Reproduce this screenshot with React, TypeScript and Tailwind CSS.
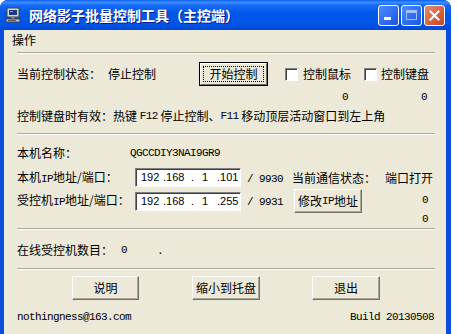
import React from "react";

const CN = { fontFamily: '"Noto Sans CJK SC", "Noto Sans", sans-serif' };
const MONO = { fontFamily: '"Liberation Mono", "DejaVu Sans Mono", monospace' };

function M({ children }: { children: React.ReactNode }) {
  return (
    <span style={MONO} className="text-[11px] tracking-[-0.6px]">
      {children}
    </span>
  );
}

function Sep() {
  return (
    <div className="ml-[13px] mr-[11px] h-[2px] border-t border-t-[#ACA899] border-b border-b-white" />
  );
}

function Btn({
  w,
  children,
  focus,
}: {
  w: string;
  children: React.ReactNode;
  focus?: boolean;
}) {
  if (focus) {
    return (
      <div className={`${w} h-[24px] border border-black bg-[#ECE9D8]`}>
        <div className="h-full border-t border-l border-t-white border-l-white border-r border-b border-r-[#716F64] border-b-[#716F64] p-[2px]">
          <div className="h-full border border-dotted border-black flex items-center justify-center text-[12px] leading-none">
            {children}
          </div>
        </div>
      </div>
    );
  }
  return (
    <div
      className={`${w} h-[24px] bg-[#ECE9D8] border-t border-l border-t-white border-l-white border-r border-b border-r-[#716F64] border-b-[#716F64] flex items-center justify-center text-[12px] leading-none shadow-[inset_-1px_-1px_0_#ACA899]`}
    >
      {children}
    </div>
  );
}

function Check() {
  return (
    <div className="w-[13px] h-[13px] bg-white border border-t-[#808080] border-l-[#808080] border-r-white border-b-white shadow-[inset_1px_1px_0_#404040]" />
  );
}

function IPBox({ last }: { last: string }) {
  return (
    <div
      className="w-[106px] h-[19px] bg-white border border-t-[#808080] border-l-[#808080] border-r-white border-b-white shadow-[inset_1px_1px_0_#404040] flex items-center pl-[5px] text-[11px] leading-none text-black"
      style={{ fontFamily: '"Liberation Sans", "DejaVu Sans", sans-serif' }}
    >
      <span className="w-[22px]">192</span>
      <span className="w-[28px]">.168</span>
      <span className="w-[26px]">
        .<span className="ml-[8px]">1</span>
      </span>
      <span>.{last}</span>
    </div>
  );
}

function ComputerIcon() {
  return (
    <svg width="17" height="16" viewBox="0 0 17 16">
      <rect x="2" y="1" width="12" height="9" fill="#d8d8d8" stroke="#404040" strokeWidth="1" />
      <rect x="4" y="3" width="8" height="5" fill="#1a3a8a" />
      <rect x="5" y="4" width="3" height="1" fill="#6aa0ff" />
      <rect x="6" y="10" width="4" height="2" fill="#808080" />
      <rect x="1" y="12" width="14" height="3" fill="#c8c8c8" stroke="#404040" strokeWidth="1" />
      <rect x="3" y="13" width="8" height="1" fill="#606060" />
    </svg>
  );
}

export default function App() {
  return (
    <div className="w-[458px] h-[334px] bg-white overflow-hidden" style={CN}>
      <div className="w-[451px] h-[334px] rounded-t-[8px] bg-[#0A4EDB] flex flex-col overflow-hidden">
        {/* Title bar */}
        <div
          className="h-[30px] flex items-center shrink-0"
          style={{
            background:
              "linear-gradient(to bottom, #0A5FF0 0%, #3C8EFF 8%, #1669F8 18%, #0058E8 45%, #0056E6 80%, #0047D6 100%)",
          }}
        >
          <div className="ml-[5px] mr-[7px]">
            <ComputerIcon />
          </div>
          <div className="text-white font-bold text-[14px] [text-shadow:1px_1px_0_#0A1E8A]">
            网络影子批量控制工具（主控端）
          </div>
          <div className="ml-auto mr-[6px] flex gap-[2px]">
            <div className="w-[21px] h-[21px] rounded-[3px] border border-white bg-gradient-to-br from-[#4B8BFF] to-[#1A56E0] flex items-end justify-start pl-[5px] pb-[5px]">
              <div className="w-[7px] h-[3px] bg-white" />
            </div>
            <div className="w-[21px] h-[21px] rounded-[3px] border border-white bg-gradient-to-br from-[#4B8BFF] to-[#1A56E0] flex items-center justify-center">
              <div className="w-[11px] h-[10px] border border-[#9FC0FF] border-t-[3px] border-t-[#9FC0FF]" />
            </div>
            <div className="w-[21px] h-[21px] rounded-[3px] border border-white bg-gradient-to-br from-[#E88A68] to-[#C8401E] flex items-center justify-center">
              <svg width="11" height="11" viewBox="0 0 11 11">
                <path d="M1.5 1.5 L9.5 9.5 M9.5 1.5 L1.5 9.5" stroke="white" strokeWidth="2" strokeLinecap="square" />
              </svg>
            </div>
          </div>
        </div>

        {/* Body */}
        <div className="flex-1 ml-[4px] mr-[5px] bg-[#ECE9D8] text-[12px] text-black leading-none">
          {/* Menu */}
          <div className="h-[20px] flex items-center pl-[8px]">操作</div>
          <div className="h-[2px]" />
          <Sep />

          {/* Row 1 */}
          <div className="mt-[8px] h-[24px] flex items-center pl-[13px]">
            <span className="w-[91px]">当前控制状态：</span>
            <span className="w-[91px]">停止控制</span>
            <Btn w="w-[69px]" focus>
              开始控制
            </Btn>
            <div className="ml-[17px] flex items-center">
              <Check />
              <span className="ml-[5px]">控制鼠标</span>
            </div>
            <div className="ml-[13px] flex items-center">
              <Check />
              <span className="ml-[4px]">控制键盘</span>
            </div>
          </div>
          <div className="h-[20px] flex items-center">
            <span className="ml-[338px]"><M>0</M></span>
            <span className="ml-[73px]"><M>0</M></span>
          </div>
          <div className="h-[20px] flex items-center pl-[13px]">
            控制键盘时有效：热键&nbsp;<M>F12</M>&nbsp;停止控制、<M>F11</M>&nbsp;移动顶层活动窗口到左上角
          </div>
          <div className="h-[7px]" />
          <Sep />

          {/* Machine name */}
          <div className="mt-[8px] h-[20px] flex items-center pl-[13px]">
            <span className="w-[113px]">本机名称：</span>
            <M>QGCCDIY3NAI9GR9</M>
          </div>
          <div className="mt-[4px] h-[21px] flex items-center pl-[13px]">
            <span className="w-[118px]">
              本机<M>IP</M>地址/端口：
            </span>
            <IPBox last="101" />
            <span className="ml-[6px] w-[45px]">
              <M>/ 9930</M>
            </span>
            <span className="w-[93px]">当前通信状态：</span>
            <span>端口打开</span>
          </div>
          <div className="mt-[2px] h-[22px] flex items-center pl-[13px]">
            <span className="w-[118px]">
              受控机<M>IP</M>地址/端口：
            </span>
            <IPBox last="255" />
            <span className="ml-[6px] w-[47px]">
              <M>/ 9931</M>
            </span>
            <Btn w="w-[68px]">
              修改<M>IP</M>地址
            </Btn>
            <div className="ml-[60px] self-start mt-[2px]">
              <M>0</M>
            </div>
          </div>
          <div className="h-[16px] relative">
            <span className="absolute left-[418px] top-[-1px]">
              <M>0</M>
            </span>
          </div>
          <Sep />

          {/* Online */}
          <div className="mt-[13px] h-[14px] flex items-center pl-[13px]">
            <span className="w-[104px]">在线受控机数目：</span>
            <M>0</M>
            <span className="ml-[30px]">
              <M>.</M>
            </span>
          </div>
          <div className="h-[11px]" />
          <Sep />

          {/* Buttons */}
          <div className="mt-[6px] h-[24px] flex items-center">
            <div className="ml-[68px]">
              <Btn w="w-[67px]">说明</Btn>
            </div>
            <div className="ml-[53px]">
              <Btn w="w-[68px]">缩小到托盘</Btn>
            </div>
            <div className="ml-[52px]">
              <Btn w="w-[68px]">退出</Btn>
            </div>
          </div>
          <div className="mt-[8px] h-[18px] flex items-center pl-[13px] pr-[12px] justify-between">
            <M>nothingness@163.com</M>
            <M>Build 20130508</M>
          </div>
        </div>
      </div>
    </div>
  );
}
